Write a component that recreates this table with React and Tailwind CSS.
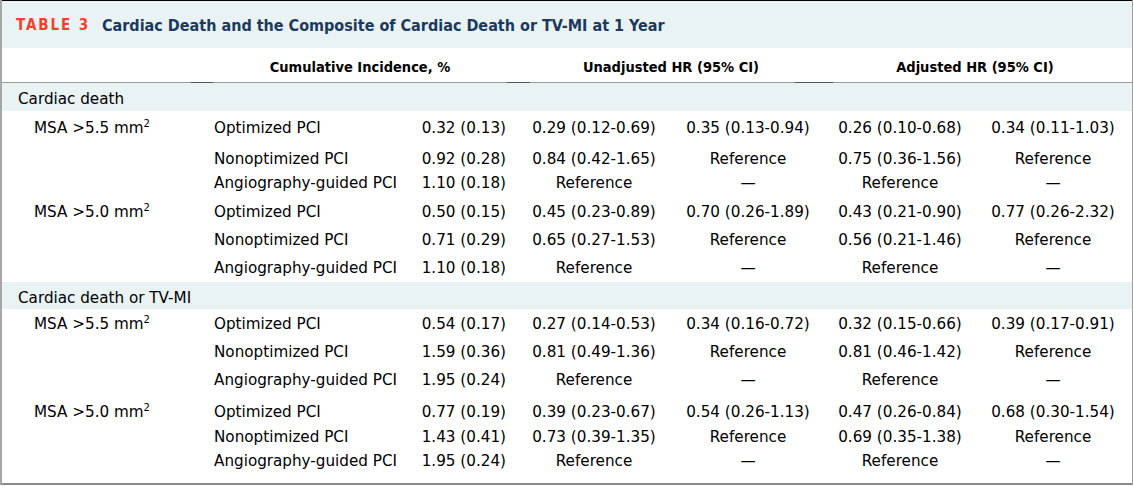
import React from "react";

const GRID = "grid grid-cols-[212px_206px_94px_160px_148px_156px_150px]";
const COND = { fontFamily: '"DejaVu Sans Condensed", "DejaVu Sans", sans-serif', fontStretch: "condensed" };

const Mm = ({ v }) => (
  <span>
    MSA {">"}
    {v} mm<sup className="text-[10px] relative -top-[6px]">2</sup>
  </span>
);

const Row = ({ pt, h, label, name, cum, u1, u2, a1, a2 }) => (
  <div className={GRID} style={{ height: h, paddingTop: pt + 1 }}>
    <div className="pl-[32px] leading-[20px]">{label ? <Mm v={label} /> : null}</div>
    <div className="leading-[20px] whitespace-nowrap">{name}</div>
    <div className="text-right pr-[8px] leading-[20px] whitespace-nowrap">{cum}</div>
    <div className="text-center leading-[20px]">{u1}</div>
    <div className="text-center leading-[20px]">{u2}</div>
    <div className="text-center leading-[20px]">{a1}</div>
    <div className="text-center leading-[20px]">{a2}</div>
  </div>
);

const Section = ({ children, h, pt }) => (
  <div className="bg-[#eaf3f3] pl-[16px] leading-[20px]" style={{ height: h, paddingTop: pt + 2 }}>
    {children}
  </div>
);

export default function App() {
  const D = "—";
  const R = "Reference";
  return (
    <div
      className="w-[1134px] h-[486px] bg-white text-black"
      style={{ fontFamily: '"DejaVu Sans", sans-serif' }}
    >
      <div className="w-[1133px] flex flex-col border-l-2 border-l-[#a6a6a6] border-r border-r-[#a0a0a0] text-[15.2px]">
        <div className="h-[1px] bg-black" />
        <div className="h-[47px] bg-[#eaf3f3] flex items-center pl-[14px] pt-[2px]" style={COND}>
          <span className="text-[#f0412f] font-bold text-[15px] tracking-[1.9px] mr-[12px]">TABLE 3</span>
          <span className="text-[#1b3a5e] font-bold text-[16px]">
            Cardiac Death and the Composite of Cardiac Death or TV-MI at 1 Year
          </span>
        </div>
        <div className={GRID + " h-[34px] items-center pt-[5px] font-bold text-[14.5px]"} style={COND}>
          <div />
          <div className="col-span-2 text-center pr-[8px]">Cumulative Incidence, %</div>
          <div className="col-span-2 text-center pl-[6px]">Unadjusted HR (95% CI)</div>
          <div className="col-span-2 text-center">Adjusted HR (95% CI)</div>
        </div>
        <div className="flex h-[1px]">
          <div className="w-[189px] bg-[#9a9a9a]" />
          <div className="w-[22px] bg-[#555]" />
          <div className="w-[294px] bg-[#9a9a9a]" />
          <div className="w-[23px] bg-[#555]" />
          <div className="w-[265px] bg-[#9a9a9a]" />
          <div className="w-[38px] bg-[#555]" />
          <div className="flex-1 bg-[#9a9a9a]" />
        </div>
        <Section h={28} pt={4}>Cardiac death</Section>
        <Row h={34} pt={6} label="5.5" name="Optimized PCI" cum="0.32 (0.13)" u1="0.29 (0.12-0.69)" u2="0.35 (0.13-0.94)" a1="0.26 (0.10-0.68)" a2="0.34 (0.11-1.03)" />
        <Row h={27} pt={3} name="Nonoptimized PCI" cum="0.92 (0.28)" u1="0.84 (0.42-1.65)" u2={R} a1="0.75 (0.36-1.56)" a2={R} />
        <Row h={25} pt={0} name="Angiography-guided PCI" cum="1.10 (0.18)" u1={R} u2={D} a1={R} a2={D} />
        <Row h={30} pt={4} label="5.0" name="Optimized PCI" cum="0.50 (0.15)" u1="0.45 (0.23-0.89)" u2="0.70 (0.26-1.89)" a1="0.43 (0.21-0.90)" a2="0.77 (0.26-2.32)" />
        <Row h={28} pt={2} name="Nonoptimized PCI" cum="0.71 (0.29)" u1="0.65 (0.27-1.53)" u2={R} a1="0.56 (0.21-1.46)" a2={R} />
        <Row h={27} pt={2} name="Angiography-guided PCI" cum="1.10 (0.18)" u1={R} u2={D} a1={R} a2={D} />
        <Section h={27} pt={4}>Cardiac death or TV-MI</Section>
        <Row h={28} pt={4} label="5.5" name="Optimized PCI" cum="0.54 (0.17)" u1="0.27 (0.14-0.53)" u2="0.34 (0.16-0.72)" a1="0.32 (0.15-0.66)" a2="0.39 (0.17-0.91)" />
        <Row h={28} pt={4} name="Nonoptimized PCI" cum="1.59 (0.36)" u1="0.81 (0.49-1.36)" u2={R} a1="0.81 (0.46-1.42)" a2={R} />
        <Row h={30} pt={4} name="Angiography-guided PCI" cum="1.95 (0.24)" u1={R} u2={D} a1={R} a2={D} />
        <Row h={28} pt={6} label="5.0" name="Optimized PCI" cum="0.77 (0.19)" u1="0.39 (0.23-0.67)" u2="0.54 (0.26-1.13)" a1="0.47 (0.26-0.84)" a2="0.68 (0.30-1.54)" />
        <Row h={25} pt={3} name="Nonoptimized PCI" cum="1.43 (0.41)" u1="0.73 (0.39-1.35)" u2={R} a1="0.69 (0.35-1.38)" a2={R} />
        <Row h={35} pt={2} name="Angiography-guided PCI" cum="1.95 (0.24)" u1={R} u2={D} a1={R} a2={D} />
        <div className="h-[2px] bg-[#8a8a8a]" />
      </div>
    </div>
  );
}
